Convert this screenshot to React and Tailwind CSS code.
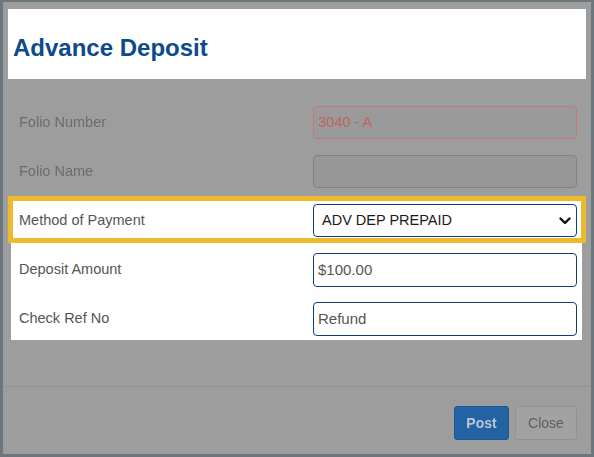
import React from 'react';

const font = { fontFamily: '"Liberation Sans", Arial, sans-serif' };

function Chevron() {
  return (
    <svg width="12" height="8" viewBox="0 0 12 8" className="absolute right-[5px] top-1/2 -translate-y-1/2">
      <polyline points="1.5,1.5 6,6 10.5,1.5" fill="none" stroke="#111" strokeWidth="2.4" strokeLinecap="round" strokeLinejoin="round" />
    </svg>
  );
}

function Row({ label, children }) {
  return (
    <div className="flex items-center h-[33px]">
      <div className="w-[302px] pl-[8px] text-[14.5px] text-[#6c6c6c]">{label}</div>
      <div className="w-[264px]">{children}</div>
    </div>
  );
}

export default function App() {
  return (
    <div style={font} className="w-[594px] h-[457px] border-[3px] border-t-[2px] border-[#6b767d] bg-[#9d9d9d] flex flex-col overflow-hidden">
      {/* header, shown bright */}
      <div className="mx-[5px] mt-[7px] h-[70px] bg-white flex items-center px-[5px]">
        <h1 className="text-[24px] font-bold text-[#0c4a89] leading-none pt-[7px]">Advance Deposit</h1>
      </div>

      {/* dimmed fields */}
      <div className="blur-[0.7px] flex flex-col gap-[16px] pt-[27px] pl-[8px]">
        <Row label="Folio Number">
          <div className="h-[33px] rounded-[4px] border border-[#bf7b7b] bg-[#9a9a9a] flex items-center px-[4px] text-[14.5px] text-[#c0615c]">3040 - A</div>
        </Row>
        <Row label="Folio Name">
          <div className="h-[33px] rounded-[4px] border border-[#7c8494] bg-[#979797]"></div>
        </Row>
      </div>

      {/* highlighted method of payment */}
      <div className="mx-[5px] mt-[8px] border-[5px] border-[#efb92c] bg-white pt-[3px] pb-[1px]">
        <div className="flex items-center h-[33px]">
          <div className="w-[300px] pl-[6px] text-[14.5px] text-[#555]">Method of Payment</div>
          <div className="w-[264px] relative h-[33px] rounded-[4px] border border-[#0b3f80] flex items-center pl-[8px] text-[14.5px] text-[#1a1a1a]">
            ADV DEP PREPAID
            <Chevron />
          </div>
        </div>
      </div>

      {/* bright lower fields */}
      <div className="ml-[8px] w-[571px] bg-white pt-[10px] pb-[4px] flex flex-col gap-[15px]">
        <div className="flex items-center h-[34px]">
          <div className="w-[302px] pl-[8px] text-[14.5px] text-[#555]">Deposit Amount</div>
          <div className="w-[264px] h-[34px] rounded-[4px] border border-[#0b3f80] flex items-center px-[4px] text-[15px] text-[#555]">$100.00</div>
        </div>
        <div className="flex items-center h-[34px]">
          <div className="w-[302px] pl-[8px] text-[14.5px] text-[#555]">Check Ref No</div>
          <div className="w-[264px] h-[34px] rounded-[4px] border border-[#0b3f80] flex items-center px-[4px] text-[15px] text-[#555]">Refund</div>
        </div>
      </div>

      {/* dimmed footer */}
      <div className="blur-[0.7px] mt-[46px] border-t border-[#929292] flex justify-end gap-[6px] pt-[19px] pr-[14px]">
        <button className="w-[55px] h-[34px] rounded-[3px] bg-[#2363a4] border border-[#1d5692] text-[14px] font-bold text-[#b9c6d6]">Post</button>
        <button className="w-[62px] h-[34px] rounded-[3px] bg-[#a2a2a2] border border-[#929292] text-[14px] text-[#5e5e5e]">Close</button>
      </div>
    </div>
  );
}
